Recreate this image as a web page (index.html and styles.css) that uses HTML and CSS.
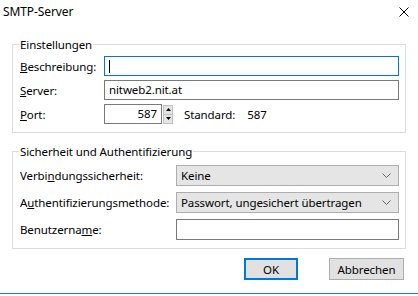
FILE: index.html
```html
<!DOCTYPE html>
<html lang="de">

<head>
    <meta charset="UTF-8">
    <title>SMTP-Server</title>
    <link rel="stylesheet" href="styles.css">
</head>

<body>
    <div class="dialog">
        <div class="titlebar">
            <span class="title">SMTP-Server</span>
            <svg class="close" width="10" height="10" viewBox="0 0 10 10">
                <path d="M0.5 0.5 L9.5 9.5 M9.5 0.5 L0.5 9.5" stroke="#000" stroke-width="1" fill="none" />
            </svg>
        </div>

        <!-- Server settings -->
        <fieldset class="group settings">
            <legend>Einstellungen</legend>
            <label><u>B</u>eschreibung:</label>
            <div class="field focused"><span class="caret"></span></div>

            <label><u>S</u>erver:</label>
            <div class="field">nitweb2.nit.at</div>

            <label><u>P</u>ort:</label>
            <div class="port-row">
                <div class="field port">587</div>
                <div class="spinner">
                    <span class="spin-btn"><svg width="5" height="3" viewBox="0 0 5 3"><path d="M0 3 L2.5 0 L5 3 Z" fill="#000" /></svg></span>
                    <span class="spin-btn"><svg width="5" height="3" viewBox="0 0 5 3"><path d="M0 0 L2.5 3 L5 0 Z" fill="#000" /></svg></span>
                </div>
                <span class="default-label">Standard:</span>
                <span class="default-value">587</span>
            </div>
        </fieldset>

        <!-- Security -->
        <fieldset class="group security">
            <legend>Sicherheit und Authentifizierung</legend>
            <label>Verbi<u>n</u>dungssicherheit:</label>
            <div class="combo">
                <span>Keine</span>
                <svg width="9" height="5" viewBox="0 0 9 5"><path d="M0.5 0.5 L4.5 4.5 L8.5 0.5" stroke="#666" fill="none" /></svg>
            </div>

            <label>A<u>u</u>thentifizierungsmethode:</label>
            <div class="combo">
                <span>Passwort, ungesichert übertragen</span>
                <svg width="9" height="5" viewBox="0 0 9 5"><path d="M0.5 0.5 L4.5 4.5 L8.5 0.5" stroke="#666" fill="none" /></svg>
            </div>

            <label>Benutzerna<u>m</u>e:</label>
            <div class="field"></div>
        </fieldset>

        <div class="buttons">
            <button class="btn default">OK</button>
            <button class="btn">Abbrechen</button>
        </div>
    </div>
</body>

</html>
```

FILE: styles.css
```css
body {
    margin: 0;
    padding: 0;
    background-color: #fff;
    font-family: "Noto Sans", sans-serif;
    font-size: 11.5px;
    letter-spacing: -0.1px;
    color: #000;
}

.dialog {
    width: 418px;
    height: 294px;
    box-sizing: border-box;
    border-bottom: 1px solid #1883d7;
}

.titlebar {
    height: 37px;
    display: flex;
    align-items: flex-start;
    justify-content: space-between;
    padding: 4px 9px 0 3px;
    box-sizing: border-box;
}

.title {
    font-size: 12px;
    line-height: 16px;
}

.close {
    margin-top: 3px;
}

.group {
    margin: 0 12px;
    border: 1px solid #dcdcdc;
    padding: 4px 6px 8px 7px;
    display: grid;
    row-gap: 4px;
    align-items: center;
}

.group legend {
    padding: 0 1px;
    margin-left: -1px;
    line-height: 15px;
}

.settings {
    grid-template-columns: 84px 1fr;
}

.security {
    margin-top: 11px;
    grid-template-columns: 156px 1fr;
    row-gap: 6px;
    padding-top: 6px;
}

.field {
    height: 20px;
    box-sizing: border-box;
    border: 1px solid #7a7a7a;
    padding: 0 4px;
    line-height: 18px;
    background-color: #fff;
}

.field.focused {
    border-color: #0078d7;
}

.caret {
    display: inline-block;
    width: 1px;
    height: 13px;
    background-color: #000;
    vertical-align: middle;
}

.port-row {
    display: flex;
    align-items: center;
}

.field.port {
    width: 58px;
    text-align: right;
}

.spinner {
    display: flex;
    flex-direction: column;
    width: 10px;
    height: 19px;
    margin-left: 1px;
}

.spin-btn {
    flex: 1;
    display: flex;
    align-items: center;
    justify-content: center;
    background-color: #e5e5e5;
    border: 1px solid #c0c0c0;
}

.spin-btn + .spin-btn {
    border-top: none;
}

.default-label {
    margin-left: 11px;
}

.default-value {
    margin-left: 12px;
}

.combo {
    height: 21px;
    box-sizing: border-box;
    border: 1px solid #adadad;
    background-color: #e5e5e5;
    display: flex;
    align-items: center;
    justify-content: space-between;
    padding: 0 7px 0 4px;
}

.security .field {
    height: 21px;
}

.buttons {
    display: flex;
    justify-content: flex-end;
    gap: 31px;
    padding: 9px 14px 0 0;
}

.btn {
    font-family: "Noto Sans", sans-serif;
    font-size: 11.5px;
    letter-spacing: -0.1px;
    height: 22px;
    padding: 0;
    background-color: #e1e1e1;
    border: 1px solid #adadad;
    color: #000;
    width: 75px;
}

.btn.default {
    border: 2px solid #0078d7;
    width: 54px;
}
```
